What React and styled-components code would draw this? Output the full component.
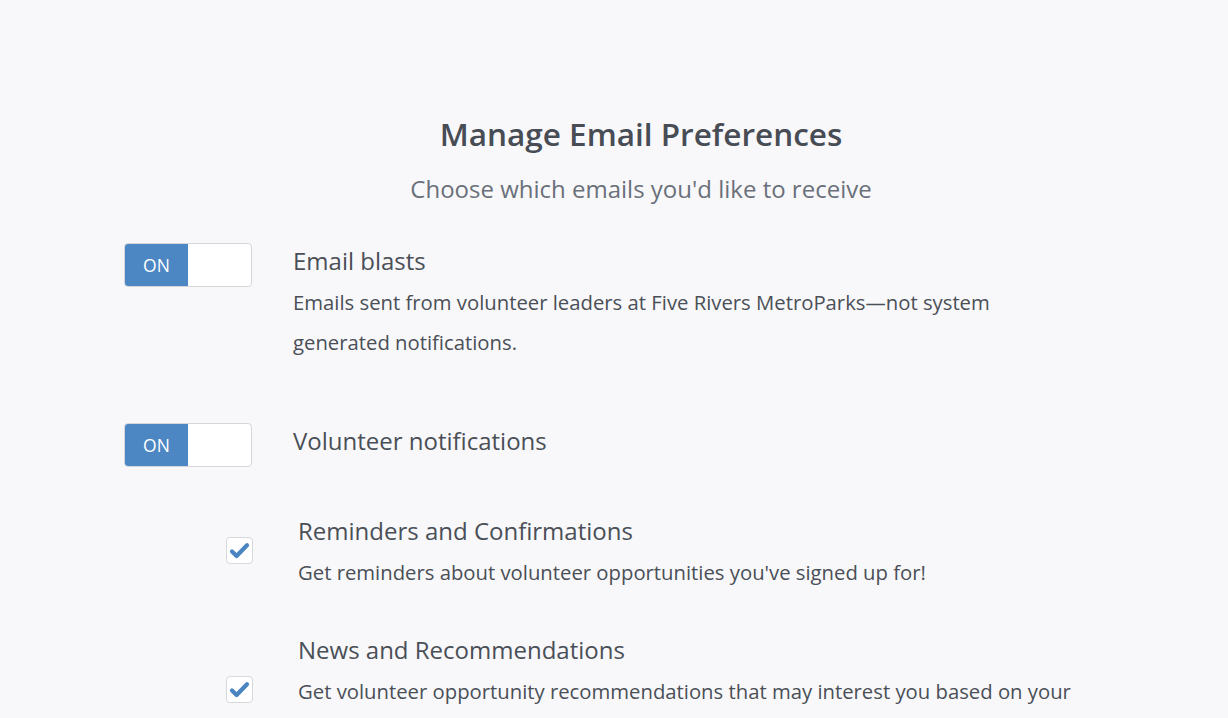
import React from "react";
import styled, { createGlobalStyle } from "styled-components";

const Global = createGlobalStyle`
  html, body { margin: 0; padding: 0; background: #f8f8fa; }
  body { font-family: "Open Sans", "Noto Sans", sans-serif; color: #4a4f57; }
`;

const Page = styled.div`
  padding: 114px 70px 0 124px;
  box-sizing: border-box;
  width: 1228px;
`;

const Header = styled.header`
  width: 1034px;
  text-align: center;
  margin-bottom: 38px;
`;

const Title = styled.h1`
  margin: 0;
  font-size: 31.5px;
  line-height: 40px;
  font-weight: 600;
  color: #474c55;
`;

const Subtitle = styled.p`
  margin: 19px 0 0;
  font-size: 24px;
  line-height: 32px;
  color: #6a707a;
`;

const Row = styled.section`
  display: flex;
  align-items: flex-start;
  gap: 41px;
  margin-bottom: ${(p) => p.$mb || 0}px;
`;

const Toggle = styled.div`
  flex: none;
  width: 128px;
  height: 44px;
  box-sizing: border-box;
  border: 1px solid #d4d6da;
  border-radius: 4px;
  background: #fff;
  display: flex;
  overflow: hidden;
`;

const ToggleOn = styled.span`
  width: 63px;
  background: #4d87c3;
  color: #fff;
  font-size: 17.5px;
  display: flex;
  align-items: center;
  justify-content: center;
`;

const Text = styled.div`
  width: ${(p) => p.$w}px;
`;

const Heading = styled.h2`
  margin: 0;
  font-size: 24px;
  line-height: 36px;
  font-weight: 400;
  color: #4a4f57;
`;

const Desc = styled.p`
  margin: 3px 0 0;
  font-size: 20.3px;
  line-height: 40px;
  color: #4a4f57;
`;

const SubList = styled.div`
  display: flex;
  flex-direction: column;
  gap: 40px;
  margin-top: 46px;
`;

const SubRow = styled.div`
  display: flex;
  align-items: center;
  gap: 45px;
  padding-left: 102px;
`;

const Check = styled.span`
  flex: none;
  width: 27px;
  height: 27px;
  margin-bottom: 4px;
  box-sizing: border-box;
  border: 1px solid #d6d8dc;
  border-radius: 4px;
  background: #fff;
  display: flex;
  align-items: center;
  justify-content: center;
`;

const CheckMark = () => (
  <svg width="21" height="17" viewBox="0 0 21 17">
    <path
      d="M3 9.5 L7.6 14 L18 3.2"
      fill="none"
      stroke="#4a84c1"
      strokeWidth="4.2"
      strokeLinecap="round"
      strokeLinejoin="round"
    />
  </svg>
);

const Switch = () => (
  <Toggle>
    <ToggleOn>ON</ToggleOn>
  </Toggle>
);

export default function App() {
  return (
    <>
      <Global />
      <Page>
        <Header>
          <Title>Manage Email Preferences</Title>
          <Subtitle>Choose which emails you'd like to receive</Subtitle>
        </Header>

        <Row $mb={61}>
          <Switch />
          <Text $w={780}>
            <Heading>Email blasts</Heading>
            <Desc>
              Emails sent from volunteer leaders at Five Rivers MetroParks—not
              system generated notifications.
            </Desc>
          </Text>
        </Row>

        <Row>
          <Switch />
          <Text $w={780}>
            <Heading>Volunteer notifications</Heading>
          </Text>
        </Row>

        <SubList>
          <SubRow>
            <Check>
              <CheckMark />
            </Check>
            <Text $w={800}>
              <Heading>Reminders and Confirmations</Heading>
              <Desc>Get reminders about volunteer opportunities you've signed up for!</Desc>
            </Text>
          </SubRow>
          <SubRow>
            <Check>
              <CheckMark />
            </Check>
            <Text $w={800}>
              <Heading>News and Recommendations</Heading>
              <Desc>
                Get volunteer opportunity recommendations that may interest you
                based on your interests and past volunteer activity.
              </Desc>
            </Text>
          </SubRow>
        </SubList>
      </Page>
    </>
  );
}
